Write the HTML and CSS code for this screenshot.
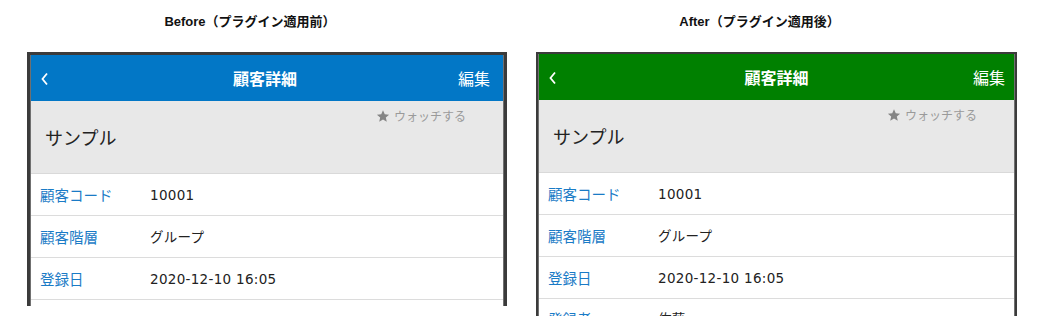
FILE: index.html
```html
<!DOCTYPE html>
<html lang="ja">

<head>
  <meta charset="UTF-8">
  <title>Before / After</title>
  <link rel="stylesheet" href="styles.css">
</head>

<body>
  <div class="compare">
    <div class="column">
      <div class="caption">Before（プラグイン適用前）</div>
      <div class="phone phone-before">
        <div class="screen">
          <div class="app-header">
            <span class="back">
              <svg width="9" height="14" viewBox="0 0 9 14"><path d="M7 1.5 L2.5 7 L7 12.5" fill="none" stroke="#fff" stroke-width="1.8"/></svg>
            </span>
            <span class="app-title">顧客詳細</span>
            <span class="edit">編集</span>
          </div>
          <div class="record-head">
            <div class="watch">
              <svg width="14" height="13" viewBox="0 0 24 23"><path d="M12 0.5 L15.1 7.6 L22.8 8.3 L17 13.4 L18.7 21 L12 17 L5.3 21 L7 13.4 L1.2 8.3 L8.9 7.6 Z" fill="#858585"/></svg>
              <span>ウォッチする</span>
            </div>
            <div class="record-name">サンプル</div>
          </div>
          <ul class="fields">
            <li><span class="label">顧客コード</span><span class="value">10001</span></li>
            <li><span class="label">顧客階層</span><span class="value">グループ</span></li>
            <li><span class="label">登録日</span><span class="value">2020-12-10 16:05</span></li>
          </ul>
        </div>
      </div>
    </div>

    <div class="column">
      <div class="caption">After（プラグイン適用後）</div>
      <div class="phone phone-after">
        <div class="screen">
          <div class="app-header">
            <span class="back">
              <svg width="9" height="14" viewBox="0 0 9 14"><path d="M7 1.5 L2.5 7 L7 12.5" fill="none" stroke="#fff" stroke-width="1.8"/></svg>
            </span>
            <span class="app-title">顧客詳細</span>
            <span class="edit">編集</span>
          </div>
          <div class="record-head">
            <div class="watch">
              <svg width="14" height="13" viewBox="0 0 24 23"><path d="M12 0.5 L15.1 7.6 L22.8 8.3 L17 13.4 L18.7 21 L12 17 L5.3 21 L7 13.4 L1.2 8.3 L8.9 7.6 Z" fill="#858585"/></svg>
              <span>ウォッチする</span>
            </div>
            <div class="record-name">サンプル</div>
          </div>
          <ul class="fields">
            <li><span class="label">顧客コード</span><span class="value">10001</span></li>
            <li><span class="label">顧客階層</span><span class="value">グループ</span></li>
            <li><span class="label">登録日</span><span class="value">2020-12-10 16:05</span></li>
            <li class="cut"><span class="label">登録者</span><span class="value">佐藤</span></li>
          </ul>
        </div>
      </div>
    </div>
  </div>
</body>

</html>
```

FILE: styles.css
```css
* {
  box-sizing: border-box;
}

body {
  margin: 0;
  background: #fff;
  font-family: "Noto Sans CJK JP", sans-serif;
  color: #333;
}

.compare {
  display: flex;
  gap: 29px;
  padding: 14px 0 0 27px;
}

.column {
  display: flex;
  flex-direction: column;
  width: 480px;
}

.phone-after,
.column:last-child {
  width: 481px;
}

.caption {
  font-family: "Liberation Sans", "Noto Sans CJK JP", sans-serif;
  font-size: 13px;
  font-weight: bold;
  color: #111;
  line-height: 16px;
  text-align: center;
  padding-right: 34px;
  margin-bottom: 22px;
}

/* phone frame, cut off at the bottom like the screenshot */
.phone {
  border: 3px solid #3b3b3b;
  border-bottom: none;
  overflow: hidden;
  height: 254px;
}

.phone-after {
  border-width: 2px;
  border-bottom: none;
  height: 264px;
}

.screen {
  border-left: 1px solid #707070;
  border-right: 1px solid #707070;
  height: 100%;
  background: #fff;
}

.app-header {
  display: flex;
  align-items: center;
  justify-content: space-between;
  height: 46px;
  padding: 0 13px 0 9px;
  background-color: #0277c6;
  color: #fff;
}

.phone-after .app-header {
  background-color: #008000;
  padding-right: 9px;
}

.back {
  display: flex;
  width: 40px;
  padding-top: 2px;
}

.app-title {
  font-size: 16px;
  font-weight: bold;
  line-height: 20px;
}

.edit {
  width: 40px;
  text-align: right;
  font-size: 16px;
  line-height: 20px;
}

.record-head {
  height: 73px;
  background: #e8e8e8;
  border-bottom: 1px solid #d9d9d9;
  padding: 7px 37px 0 14px;
}

.watch {
  display: flex;
  align-items: center;
  justify-content: flex-end;
  gap: 4px;
  font-size: 12px;
  line-height: 16px;
  color: #9a9a9a;
}

.record-name {
  font-size: 18px;
  line-height: 24px;
  color: #222;
  margin-top: 1px;
}

ul {
  list-style-type: none;
  margin: 0;
  padding: 0;
}

.fields li {
  display: flex;
  align-items: center;
  height: 42px;
  border-bottom: 1px solid #dcdcdc;
  padding-left: 9px;
}

.fields li.cut {
  align-items: flex-start;
  padding-top: 10px;
}

.label {
  width: 110px;
  font-size: 14.5px;
  line-height: 20px;
  color: #1a7bc6;
}

.value {
  font-family: "DejaVu Sans", "Noto Sans CJK JP", sans-serif;
  font-size: 13.5px;
  line-height: 20px;
  letter-spacing: 0.3px;
  color: #222;
}
```
